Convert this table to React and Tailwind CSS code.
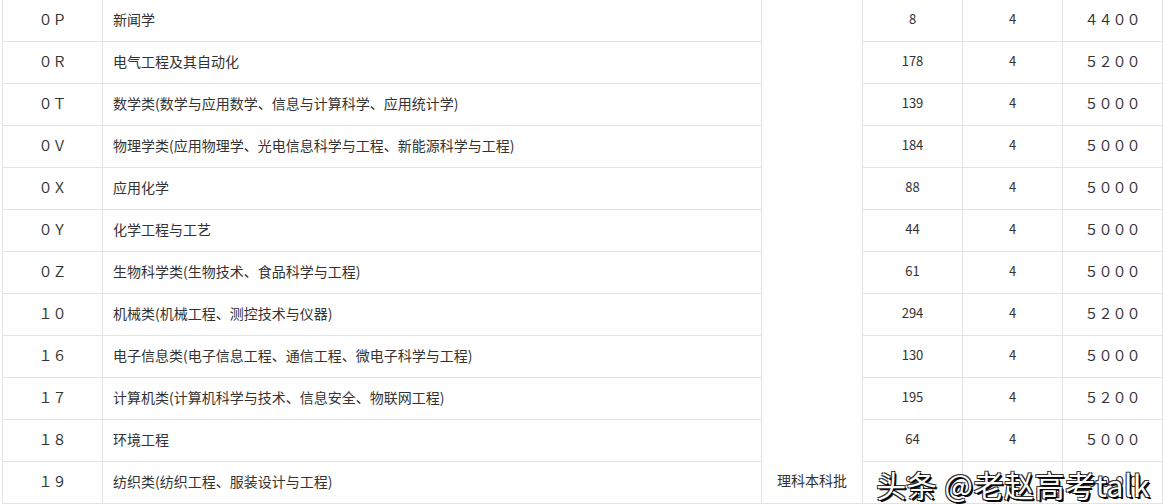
const rows = [
  { code: '０Ｐ', name: '新闻学', count: '8', years: '4', fee: '４４００' },
  { code: '０Ｒ', name: '电气工程及其自动化', count: '178', years: '4', fee: '５２００' },
  { code: '０Ｔ', name: '数学类(数学与应用数学、信息与计算科学、应用统计学)', count: '139', years: '4', fee: '５０００' },
  { code: '０Ｖ', name: '物理学类(应用物理学、光电信息科学与工程、新能源科学与工程)', count: '184', years: '4', fee: '５０００' },
  { code: '０Ｘ', name: '应用化学', count: '88', years: '4', fee: '５０００' },
  { code: '０Ｙ', name: '化学工程与工艺', count: '44', years: '4', fee: '５０００' },
  { code: '０Ｚ', name: '生物科学类(生物技术、食品科学与工程)', count: '61', years: '4', fee: '５０００' },
  { code: '１０', name: '机械类(机械工程、测控技术与仪器)', count: '294', years: '4', fee: '５２００' },
  { code: '１６', name: '电子信息类(电子信息工程、通信工程、微电子科学与工程)', count: '130', years: '4', fee: '５０００' },
  { code: '１７', name: '计算机类(计算机科学与技术、信息安全、物联网工程)', count: '195', years: '4', fee: '５２００' },
  { code: '１８', name: '环境工程', count: '64', years: '4', fee: '５０００' },
  { code: '１９', name: '纺织类(纺织工程、服装设计与工程)', count: '92', years: '4', fee: '５０００' },
]

const cell = 'border border-[#e3e3e3] h-[42px] p-0 pb-[3px]'

export default function App() {
  return (
    <div
      className="relative w-[1164px] h-[504px] overflow-hidden bg-white text-[#333] text-[14px]"
      style={{ fontFamily: '"Noto Sans CJK SC", "Noto Sans", sans-serif' }}
    >
      <table className="border-collapse ml-[2px] mt-[-1px] table-fixed w-[1160px]">
        <colgroup>
          <col className="w-[100px]" />
          <col className="w-[659px]" />
          <col className="w-[101px]" />
          <col className="w-[100px]" />
          <col className="w-[100px]" />
          <col className="w-[100px]" />
        </colgroup>
        <tbody>
          {rows.map((r, i) => (
            <tr key={r.code} className="h-[42px]">
              <td className={`${cell} text-center`}>{r.code}</td>
              <td className={`${cell} pl-[10px]`}>{r.name}</td>
              {i === 0 && (
                <td rowSpan={12} className="border border-[#e3e3e3] p-0 align-bottom text-center pb-[12px]">
                  理科本科批
                </td>
              )}
              <td className={`${cell} text-center text-[13px]`}>{r.count}</td>
              <td className={`${cell} text-center text-[13px]`}>{r.years}</td>
              <td className={`${cell} text-center`}>{r.fee}</td>
            </tr>
          ))}
        </tbody>
      </table>

      <div
        className="absolute right-[14px] bottom-[5px] text-white text-[30px] leading-none whitespace-nowrap tracking-[0.5px]"
        style={{
          textShadow:
            '1px 1px 0 #000, 2px 2px 0 #111, -1px -1px 0 #333, 1px -1px 0 #333, -1px 1px 0 #333',
        }}
      >
        头条 @老赵高考talk
      </div>
    </div>
  )
}
